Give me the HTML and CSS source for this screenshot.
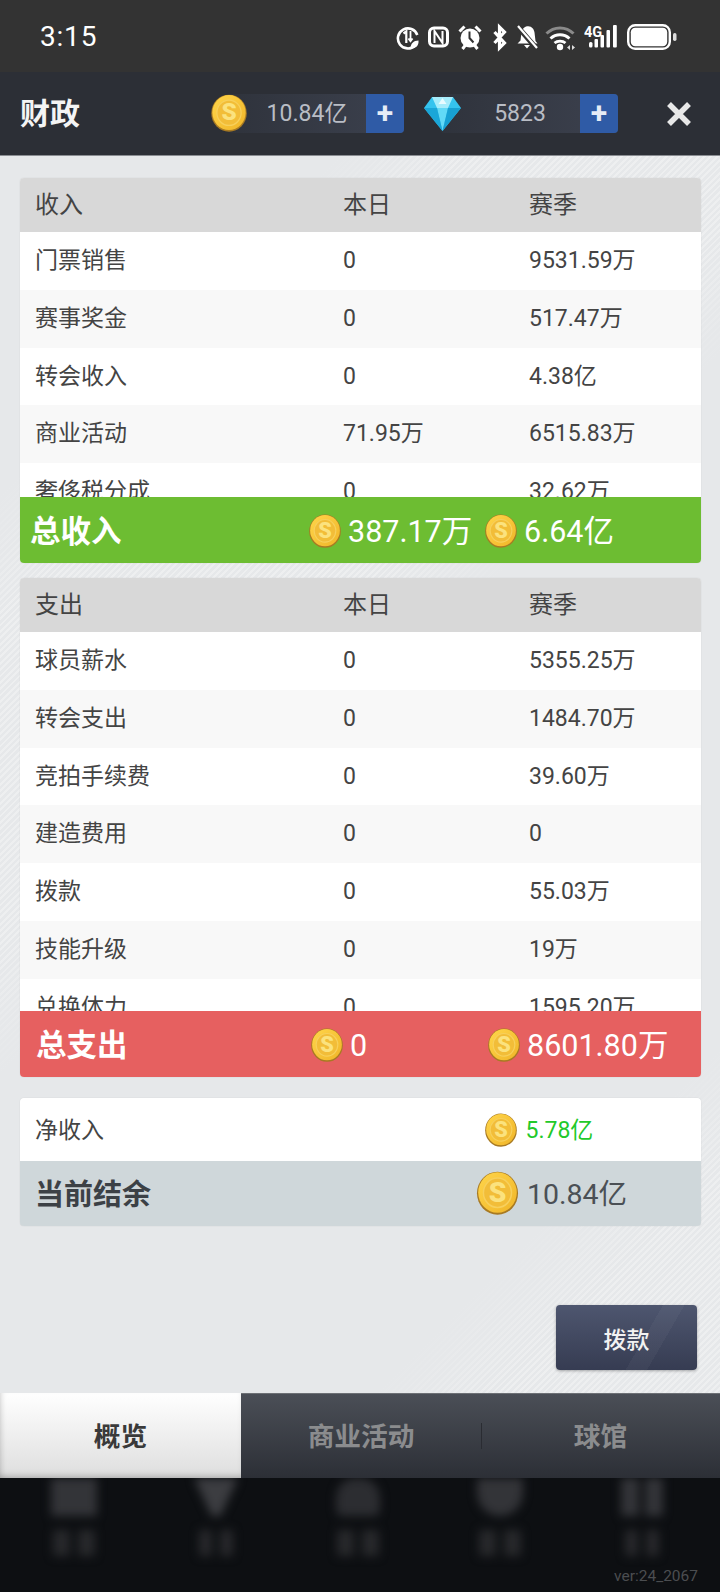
FILE: index.html
```html
<!DOCTYPE html>
<html lang="zh">
<head>
<meta charset="utf-8">
<title>财政</title>
<link rel="stylesheet" href="styles.css">
</head>
<body>
<svg class="defs" width="0" height="0" aria-hidden="true">
  <defs>
    <linearGradient id="coinFill" x1="0" y1="0" x2="1" y2="1">
      <stop offset="0" stop-color="#ffd54a"/>
      <stop offset="1" stop-color="#f0b528"/>
    </linearGradient>
    <symbol id="coin" viewBox="0 0 34 36">
      <ellipse cx="17" cy="18.200" rx="16.800" ry="17.600" fill="#a87a22"/>
      <ellipse cx="17" cy="17.600" rx="15.800" ry="16.600" fill="url(#coinFill)"/>
      <ellipse cx="17" cy="17.800" rx="11.500" ry="12" fill="#f2bd38" stroke="#f7d05c" stroke-width="1.200"/>
      <text x="17" y="25" text-anchor="middle" class="coin-s">S</text>
    </symbol>
  </defs>
</svg>
<div class="app">
  <div class="status">
    <span class="time">3:15</span>
    <div class="status-icons">
      <svg width="32" height="30" viewBox="0 0 32 30"><path d="M19 23.500A10 10 0 1 1 21.300 13" fill="none" stroke="#fff" stroke-width="2.600"/><path d="M7.500 11.500l2.800-2V21" fill="none" stroke="#fff" stroke-width="2.200"/><path d="M14.500 9v10M12.400 16.500l2.100 2.700 2.100-2.700" fill="none" stroke="#fff" stroke-width="1.800"/><path d="M14.500 26.500c0-5 3-8 8-8 .5 5-2.500 8-8 8z" fill="#fff"/></svg>
      <svg width="30" height="30" viewBox="0 0 30 30"><rect x="1.500" y="6" width="18" height="18" rx="4.500" fill="none" stroke="#fff" stroke-width="3"/><path d="M6.500 21V9l8 12V9" fill="none" stroke="#fff" stroke-width="2"/></svg>
      <svg width="35" height="30" viewBox="0 0 35 30"><circle cx="12" cy="16" r="9.500" fill="#fff"/><path d="M11.500 9.500V16l4 4.500" fill="none" stroke="#333" stroke-width="2"/><path d="M1.500 9.500l5-5M22.500 9.500l-5-5M4.500 27l3-4M19.500 27l-3-4" stroke="#fff" stroke-width="3"/></svg>
      <svg width="23" height="30" viewBox="0 0 23 30"><path d="M1.500 10l10 11-5 5V5l5 5-10 11" fill="none" stroke="#fff" stroke-width="3.200"/></svg>
      <svg width="29" height="30" viewBox="0 0 29 30"><path d="M10 4.500c5-1.500 8 2 8.500 6l1 8.500 2 2.500H1.500l3-3 1-8.500c.5-2.500 2-4.500 4.500-5.500z" fill="#fff"/><path d="M8 23h6l-3 3.500z" fill="#fff"/><path d="M1 4l20 23" stroke="#333" stroke-width="5"/><path d="M2 4l19 22" stroke="#fff" stroke-width="2.200"/></svg>
      <svg width="39" height="30" viewBox="0 0 39 30"><path d="M1.500 11.500C9 4 21 4 28.500 11.500" fill="none" stroke="#8a8a8a" stroke-width="3"/><path d="M5.500 16.500c5.500-5 13.500-5 19 0" fill="none" stroke="#fff" stroke-width="3"/><path d="M9.500 21c3-2.500 8-2.500 11 0" fill="none" stroke="#fff" stroke-width="2.800"/><circle cx="15" cy="25" r="3.200" fill="#fff"/><path d="M22 25.500l3-2.500v5zM30 25.500l-3-2.500v5z" fill="#ddd"/></svg>
      <svg width="43" height="30" viewBox="0 0 43 30"><text x="0" y="15" class="sig-text">4G</text><rect x="5" y="20" width="3.500" height="5.500" rx="1.500" fill="#fff"/><rect x="10.500" y="17" width="3.500" height="8.500" rx="1" fill="#fff"/><rect x="16.500" y="13" width="3.500" height="12.500" rx="1" fill="#fff"/><rect x="22.500" y="8" width="3.500" height="17.500" rx="1" fill="#fff"/><rect x="29" y="3" width="3.800" height="22.500" rx="1" fill="#fff"/></svg>
      <svg width="50" height="30" viewBox="0 0 50 30"><rect x="1.200" y="3.200" width="41.600" height="23.600" rx="7" fill="none" stroke="#fff" stroke-width="2.400"/><rect x="3.800" y="5.800" width="36.400" height="18.400" rx="4.500" fill="#fff"/><rect x="46" y="11" width="3.500" height="8" rx="1.700" fill="#ddd"/></svg>
    </div>
  </div>

  <header class="topbar">
    <h1 class="title">财政</h1>
    <div class="res res-gold">
      <svg class="res-coin"><use href="#coin"/></svg>
      <div class="res-pill"><span class="res-val">10.84亿</span><span class="plus">+</span></div>
    </div>
    <div class="res res-gem">
      <svg class="res-gem-icon" viewBox="0 0 37 34"><path d="M8 0h21l8 11-18.500 23L0 11z" fill="#35c3ee"/><path d="M8 0h21l-5 11H13z" fill="#a6ecfb"/><path d="M13 11h11l-5.500 23z" fill="#62d9f6"/><path d="M0 11h13l5.500 23z" fill="#1aa6d8"/><path d="M37 11H24l-5.500 23z" fill="#18a0d2"/><path d="M18.500 1l4 6h-8z" fill="#e8fbff"/></svg>
      <div class="res-pill"><span class="res-val">5823</span><span class="plus">+</span></div>
    </div>
    <svg class="close" viewBox="0 0 26 26"><path d="M3 3l20 20M23 3L3 23" stroke="#e8e8e8" stroke-width="5.500" fill="none"/></svg>
  </header>

  <main class="main">
    <section class="panel">
      <div class="row head"><span>收入</span><span>本日</span><span>赛季</span></div>
      <div class="rows rows-income">
        <div class="row"><span>门票销售</span><span>0</span><span>9531.59万</span></div>
        <div class="row alt"><span>赛事奖金</span><span>0</span><span>517.47万</span></div>
        <div class="row"><span>转会收入</span><span>0</span><span>4.38亿</span></div>
        <div class="row alt"><span>商业活动</span><span>71.95万</span><span>6515.83万</span></div>
        <div class="row"><span>奢侈税分成</span><span>0</span><span>32.62万</span></div>
      </div>
      <div class="total total-in">
        <strong class="total-label">总收入</strong>
        <span class="amount"><svg class="coin"><use href="#coin"/></svg>387.17万</span>
        <span class="amount"><svg class="coin"><use href="#coin"/></svg>6.64亿</span>
      </div>
    </section>

    <section class="panel panel-out">
      <div class="row head"><span>支出</span><span>本日</span><span>赛季</span></div>
      <div class="rows rows-out">
        <div class="row"><span>球员薪水</span><span>0</span><span>5355.25万</span></div>
        <div class="row alt"><span>转会支出</span><span>0</span><span>1484.70万</span></div>
        <div class="row"><span>竞拍手续费</span><span>0</span><span>39.60万</span></div>
        <div class="row alt"><span>建造费用</span><span>0</span><span>0</span></div>
        <div class="row"><span>拨款</span><span>0</span><span>55.03万</span></div>
        <div class="row alt"><span>技能升级</span><span>0</span><span>19万</span></div>
        <div class="row"><span>兑换体力</span><span>0</span><span>1595.20万</span></div>
      </div>
      <div class="total total-out">
        <strong class="total-label">总支出</strong>
        <span class="amount"><svg class="coin"><use href="#coin"/></svg>0</span>
        <span class="amount"><svg class="coin"><use href="#coin"/></svg>8601.80万</span>
      </div>
    </section>

    <section class="summary">
      <div class="net">
        <span>净收入</span>
        <span class="net-val"><svg class="coin"><use href="#coin"/></svg>5.78亿</span>
      </div>
      <div class="balance">
        <strong class="balance-label">当前结余</strong>
        <span class="balance-val"><svg class="coin-lg"><use href="#coin"/></svg>10.84亿</span>
      </div>
    </section>

    <button class="grant" type="button">拨款</button>
  </main>

  <nav class="tabs">
    <div class="tab active">概览</div>
    <div class="tab">商业活动</div>
    <div class="tab tab-last">球馆</div>
  </nav>

  <footer class="dock">
    <div class="dock-items">
      <div class="dock-item"><div class="dk dk-rect"></div><div class="dl"><i></i><i></i></div></div>
      <div class="dock-item"><div class="dk dk-v"></div><div class="dl dl-short"><i></i><i></i></div></div>
      <div class="dock-item"><div class="dk dk-mid"></div><div class="dl"><i></i><i></i></div></div>
      <div class="dock-item"><div class="dk dk-round"></div><div class="dl"><i></i><i></i></div></div>
      <div class="dock-item"><div class="dk dk-bars"></div><div class="dl dl-short"><i></i><i></i></div></div>
    </div>
    <span class="ver">ver:24_2067</span>
  </footer>
</div>
</body>
</html>
```

FILE: styles.css
```css
* { box-sizing: border-box; }
html, body { margin: 0; padding: 0; }
body {
  width: 720px;
  height: 1592px;
  overflow: hidden;
  font-family: Roboto, "Noto Sans CJK SC", sans-serif;
  line-height: 1.2;
  color: #444;
}
.defs { position: absolute; }
.coin-s {
  font: 900 23px Roboto, sans-serif;
  fill: #fbe27e;
}
.sig-text {
  font: 700 14.500px Roboto, sans-serif;
  fill: #fff;
}
.app {
  display: flex;
  flex-direction: column;
  height: 1592px;
}

/* status bar */
.status {
  flex: 0 0 72px;
  display: flex;
  align-items: center;
  justify-content: space-between;
  background: #333333;
  padding: 1px 43px 0 40px;
}
.time {
  color: #fff;
  font-size: 28px;
  letter-spacing: 0.8px;
}
.status-icons { display: flex; align-items: center; }

/* header */
.topbar {
  flex: 0 0 84px;
  display: flex;
  align-items: center;
  background: #2c2f36;
  border-bottom: 1px solid #8a8d92;
  padding-left: 20px;
}
.title {
  margin: 0;
  width: 192px;
  font-size: 30px;
  font-weight: 700;
  color: #f4f4f4;
}
.res { position: relative; display: flex; align-items: center; height: 39px; }
.res-gold { width: 192px; }
.res-gem { width: 194px; margin-left: 20px; margin-right: 48px; }
.res-coin {
  position: absolute;
  left: -1px;
  top: 0;
  width: 36px;
  height: 38px;
  z-index: 1;
}
.res-gem-icon {
  position: absolute;
  left: 0;
  top: 3px;
  width: 37px;
  height: 34px;
  z-index: 1;
}
.res-pill {
  display: flex;
  align-items: center;
  width: 100%;
  height: 39px;
  margin-left: 16px;
  border-radius: 4px;
  background: linear-gradient(90deg, #2f333c, #3c414e);
  overflow: hidden;
}
.res-val {
  flex: 1;
  padding-left: 20px;
  text-align: center;
  font-size: 23px;
  color: #b9bdc5;
}
.plus {
  flex: 0 0 38px;
  height: 39px;
  line-height: 37px;
  text-align: center;
  background: #2f5ba6;
  color: #e6ecf6;
  font-size: 30px;
  font-weight: 700;
}
.close { width: 26px; height: 26px; }

/* main */
.main {
  flex: 1;
  display: flex;
  flex-direction: column;
  padding: 22px 19px 23px 20px;
  background:
    repeating-linear-gradient(135deg, #e6e8ea 0 240px, rgba(230,232,234,0) 330px 560px, #e6e8ea 650px 900px),
    repeating-linear-gradient(135deg, rgba(255,255,255,0) 0 2.500px, rgba(255,255,255,.3) 2.500px 4.500px),
    #e6e8ea;
}
.panel {
  display: flex;
  flex-direction: column;
  border-radius: 4px;
  overflow: hidden;
  background: #fff;
  box-shadow: 0 0 1px rgba(0,0,0,.2);
}
.panel-out { margin-top: 15px; }
.row {
  display: grid;
  grid-template-columns: 308px 186px 1fr;
  align-items: center;
  height: 57.800px;
  padding-left: 15px;
  font-size: 23px;
  color: #444;
  background: #fff;
}
.row.alt { background: #f8f8f8; }
.row.head {
  height: 54px;
  background: #d8d8d8;
  font-size: 24px;
}
.rows { overflow: hidden; }
.rows-income { height: 265px; }
.rows-out { height: 379px; }

.total {
  display: grid;
  height: 66px;
  padding-top: 4px;
  align-items: center;
  color: #fff;
  font-size: 30.500px;
}
.total-in {
  grid-template-columns: 279px 176px 1fr;
  padding-left: 10px;
  background: #6dbd32;
}
.total-out {
  grid-template-columns: 275px 177px 1fr;
  padding-left: 16px;
  background: #e66060;
}
.total-label { font-weight: 700; font-size: 30.500px; }
.amount {
  display: flex;
  align-items: center;
  gap: 7px;
  white-space: nowrap;
}
.coin {
  flex: none;
  width: 32px;
  height: 34px;
  margin-top: -2px;
}

/* summary */
.summary {
  margin-top: 21px;
  border-radius: 4px;
  overflow: hidden;
  box-shadow: 0 0 1px rgba(0,0,0,.2);
}
.net {
  display: grid;
  grid-template-columns: 449.500px 1fr;
  align-items: center;
  height: 63px;
  padding: 2px 0 0 15px;
  background: #fff;
  font-size: 23px;
  color: #444;
}
.net-val {
  display: flex;
  align-items: center;
  gap: 9px;
  color: #22c92a;
}
.balance {
  display: grid;
  grid-template-columns: 441px 1fr;
  align-items: center;
  height: 65px;
  padding: 4px 0 0 15px;
  background: #cfd7da;
}
.balance-label {
  font-size: 29px;
  font-weight: 700;
  color: #3c4146;
}
.balance-val {
  display: flex;
  align-items: center;
  gap: 8px;
  font-size: 28.500px;
  color: #4b5055;
}
.coin-lg {
  flex: none;
  width: 43px;
  height: 44px;
  margin-top: -6px;
}

/* grant button */
.grant {
  width: 141px;
  height: 65px;
  margin: auto 4px 0 auto;
  border: 0;
  border-radius: 4px;
  background:
    linear-gradient(120deg, rgba(255,255,255,0) 60%, rgba(255,255,255,.035) 60% 72%, rgba(255,255,255,0) 72%),
    linear-gradient(180deg, #4e566f, #363c52);
  box-shadow: 0 1px 3px rgba(0,0,0,.3);
  color: #f2f2f2;
  font: 500 23px Roboto, "Noto Sans CJK SC", sans-serif;
}

/* tabs */
.tabs {
  flex: 0 0 85px;
  display: grid;
  grid-template-columns: 241px 240px 1fr;
  background: linear-gradient(180deg, #4b4f57, #2c2f36);
  box-shadow: inset 0 1px 0 #6d7075;
}
.tab {
  display: flex;
  align-items: center;
  justify-content: center;
  padding-top: 3px;
  font-size: 26.700px;
  font-weight: 700;
  color: #8b8c8e;
  position: relative;
}
.tab.active {
  color: #3a3a3a;
  background: linear-gradient(180deg, #ffffff, #dedede);
  box-shadow: inset 0 -5px 6px -3px rgba(0,0,0,.22), inset 5px 0 6px -4px rgba(0,0,0,.14);
}
.tab-last::before {
  content: "";
  position: absolute;
  left: 0;
  top: 30px;
  height: 26px;
  width: 1px;
  background: #2a2c32;
}

/* dock */
.dock {
  flex: 0 0 114px;
  position: relative;
  background: #0d0f12;
  overflow: hidden;
}
.dock-items {
  display: grid;
  grid-template-columns: repeat(5, 1fr);
  padding: 0 7px 0 3px;
  filter: blur(5px);
}
.dock-item {
  display: flex;
  flex-direction: column;
  align-items: center;
  gap: 14px;
}
.dk { width: 44px; height: 38px; background: #333438; }
.dk-rect { width: 46px; }
.dk-v { clip-path: polygon(0 0, 100% 0, 60% 100%, 40% 100%); background: #3c3d41; }
.dk-mid { border-radius: 20px 20px 6px 6px; background: #2c2d31; }
.dk-round { border-radius: 0 0 26px 26px; width: 46px; }
.dk-bars {
  width: 42px;
  background: linear-gradient(90deg, #333438 0 42%, transparent 42% 58%, #333438 58%);
}
.dl { display: flex; gap: 8px; }
.dl i {
  display: block;
  width: 17px;
  height: 26px;
  background: #27282b;
}
.dl-short i { width: 13px; }
.ver {
  position: absolute;
  right: 22px;
  bottom: 6px;
  font-size: 15.500px;
  color: #4b4d50;
}
```
